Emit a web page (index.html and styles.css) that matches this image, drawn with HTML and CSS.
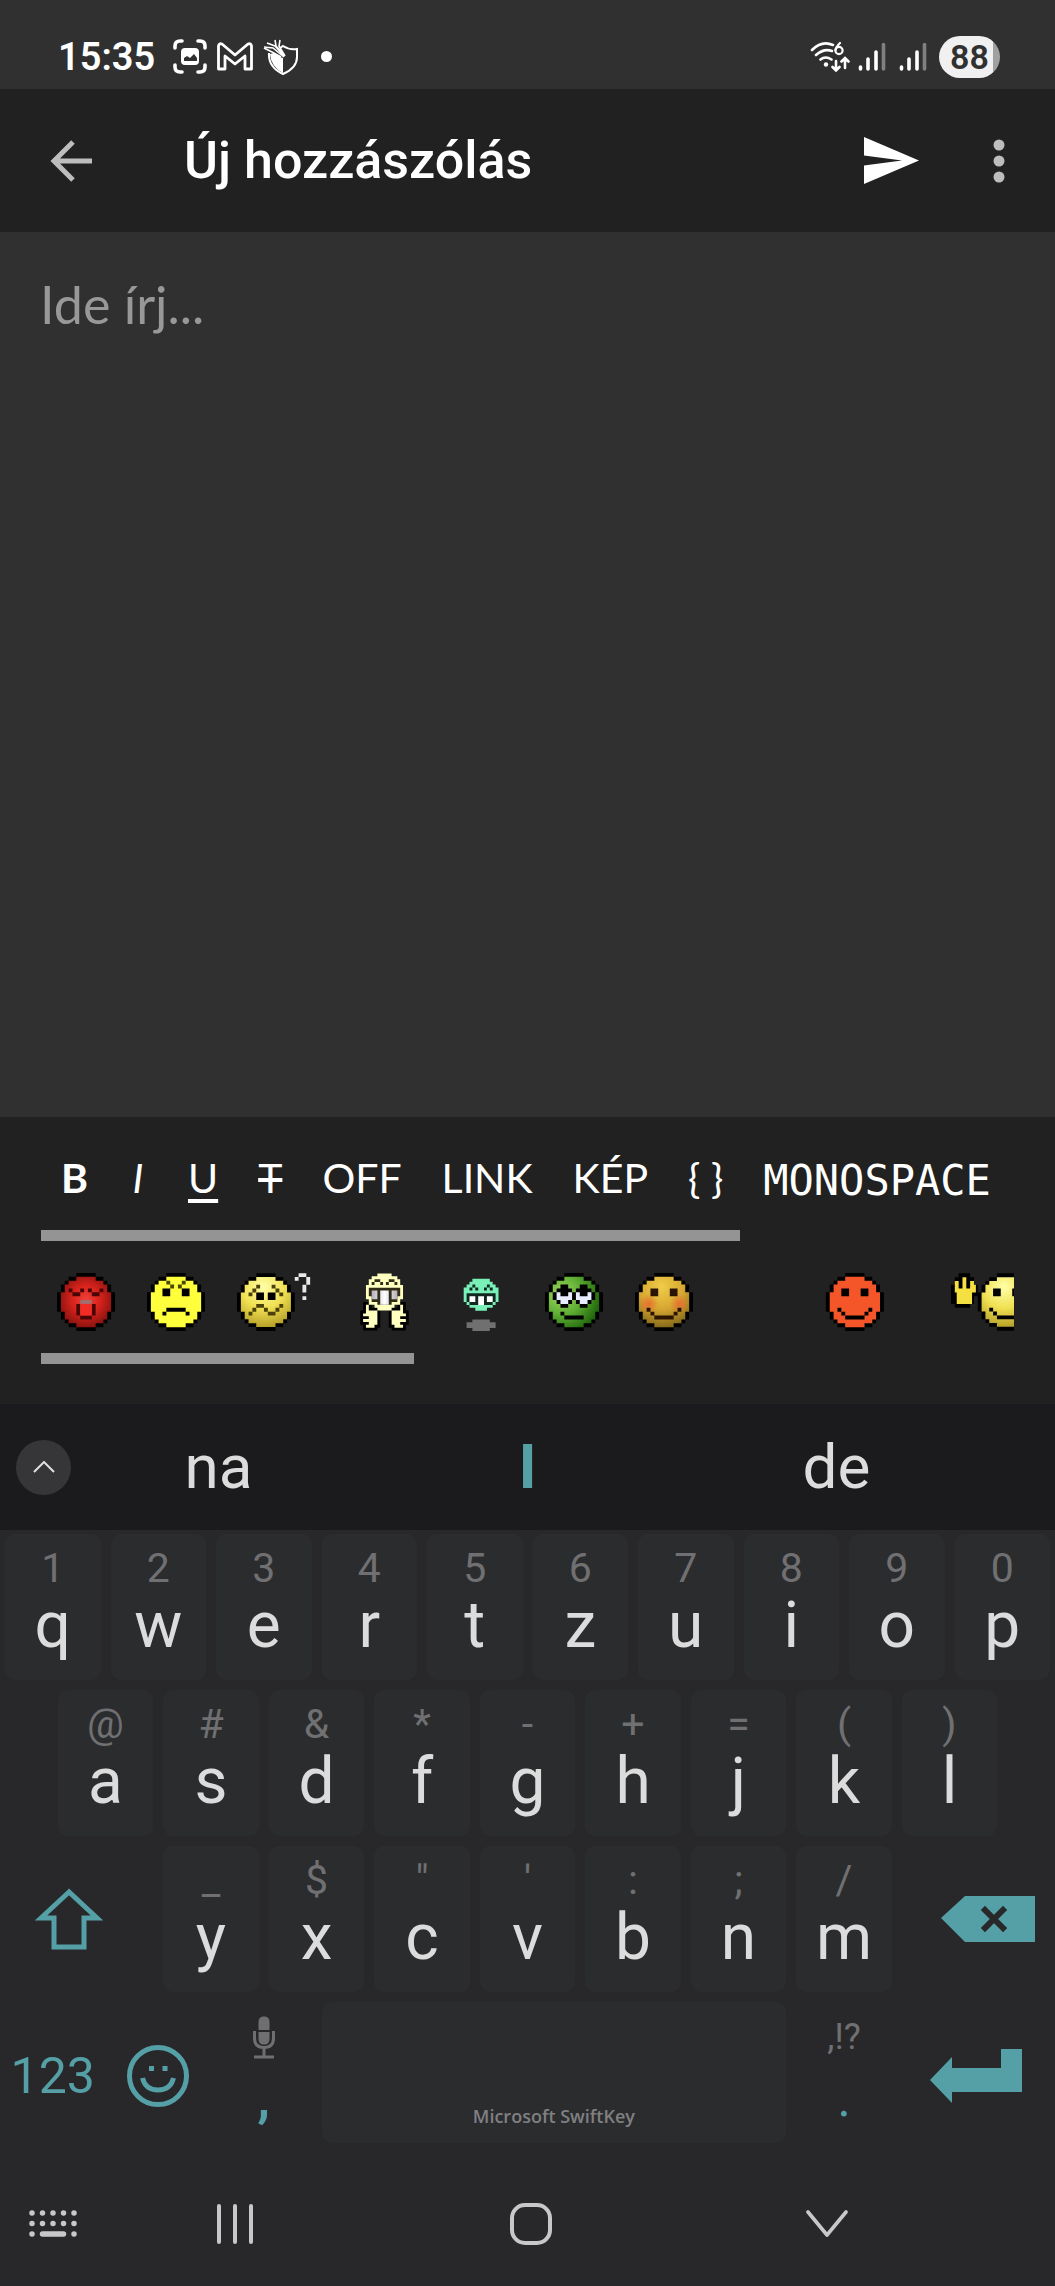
FILE: index.html
```html
<!DOCTYPE html>
<html lang="hu">

<head>
    <meta charset="UTF-8" />
    <meta name="viewport" content="width=device-width, initial-scale=1.0" />
    <title>Új hozzászólás</title>
    <link rel="stylesheet" href="styles.css">
</head>

<body>
    <!-- shared smiley shapes -->
    <svg class="defs" width="0" height="0" aria-hidden="true">
        <defs>
            <path id="edge" d="M5 0h5v1h2v1h1v1h1v2h1v5h-1v2h-1v1h-1v1h-2v1h-5v-1h-2v-1h-1v-1h-1v-2h-1v-5h1v-2h1v-1h1v-1h2z" />
            <path id="disc" d="M5 1h5v1h2v1h1v2h1v5h-1v2h-1v1h-2v1h-5v-1h-2v-1h-1v-2h-1v-5h1v-2h1v-1h2z" />
            <path id="smile" d="M4 4h2v2h-2zM9 4h2v2h-2zM3 9h1v1h-1zM4 10h1v1h-1zM5 11h5v1h-5zM10 10h1v1h-1zM11 9h1v1h-1z" />
            <radialGradient id="red" cx=".5" cy=".45" r=".55">
                <stop offset="0" stop-color="#f0403a" />
                <stop offset=".5" stop-color="#d8231c" />
                <stop offset="1" stop-color="#8e1410" />
            </radialGradient>
            <radialGradient id="yellow" cx=".45" cy=".2" r=".85">
                <stop offset="0" stop-color="#ffffa8" />
                <stop offset=".5" stop-color="#f0e052" />
                <stop offset="1" stop-color="#b09a24" />
            </radialGradient>
            <radialGradient id="green" cx=".25" cy=".35" r=".8">
                <stop offset="0" stop-color="#a2d860" />
                <stop offset=".5" stop-color="#5fae34" />
                <stop offset="1" stop-color="#20640c" />
            </radialGradient>
            <radialGradient id="gold" cx=".45" cy=".2" r=".85">
                <stop offset="0" stop-color="#f0cc48" />
                <stop offset=".5" stop-color="#d8a832" />
                <stop offset="1" stop-color="#7e6418" />
            </radialGradient>
            <radialGradient id="cheek">
                <stop offset="0" stop-color="#e87030" />
                <stop offset="1" stop-color="#e87030" stop-opacity="0" />
            </radialGradient>
            <linearGradient id="teeth">
                <stop offset="0" stop-color="#b4b0bc" />
                <stop offset=".5" stop-color="#fff" />
                <stop offset="1" stop-color="#b4b0bc" />
            </linearGradient>
        </defs>
    </svg>

    <div class="screen">
        <!-- status bar -->
        <div class="status">
            <span class="time">15:35</span>
            <svg class="s-shot" width="34" height="35" viewBox="0 0 34 35" fill="none" stroke="#fff" stroke-width="3.600" stroke-linecap="round">
                <path d="M2 9V7q0-5 5-5h2M25 2h2q5 0 5 5v2M32 26v2q0 5-5 5h-2M9 33H7q-5 0-5-5v-2" />
                <rect x="8" y="9" width="18" height="17" rx="4" fill="#fff" stroke="none" />
                <path d="M11 22v-3l3-2 3 2 4-4 3 4v3z" fill="#303030" stroke="none" />
            </svg>
            <svg class="s-mail" width="36" height="29" viewBox="0 0 36 29" fill="none" stroke="#fff" stroke-width="2.800" stroke-linejoin="round">
                <path d="M1.500 27V4Q2 1 5 2l13 11L31 2q3-1 3.500 2v23H28V14l-10 8L8 14v13z" />
            </svg>
            <svg class="s-shield" width="36" height="36" viewBox="0 0 36 36" fill="none" stroke="#fff" stroke-width="2">
                <path d="M17 9l3-2q6 4 14 3v8q0 11-14 17Q5 28 6 14" />
                <path d="M20 19v15Q8 28 7 15l4-1 6 4z" fill="#fff" stroke="none" />
                <path d="M1 8l9 1 11 9M4 4l8 3 9 10M12 1l1 6 9 10M17 1l-1 6 6 10M1 9l8 4 9 5" stroke-width="1.600" />
            </svg>
            <i class="dot"></i>
            <span class="space"></span>
            <svg class="s-wifi" width="40" height="32" viewBox="0 0 40 32" fill="none" stroke="#fff" stroke-width="2.600" stroke-linecap="round">
                <path d="M2 9q10-10 21-5M6 14q8-7 16-4M10.500 18.500q5-4 11 0" />
                <circle cx="16" cy="23.500" r="2.200" fill="#fff" stroke="none" />
                <path d="M30 2q-4 4-4.500 7" stroke-width="2.200" />
                <circle cx="29" cy="9.500" r="3.600" stroke-width="2.200" />
                <path d="M26 20v9M22.500 26l3.500 3.500 3.500-3.500M35 27v-9M31.500 20.500l3.500-3.500 3.500 3.500" />
            </svg>
            <svg class="s-signal" width="28" height="30" viewBox="0 0 28 30" stroke="#fff" stroke-width="3.600" stroke-linecap="round">
                <path d="M2.500 25v2M10 17v10M18 10v17" />
                <path d="M25.500 2.500V27" stroke="#808080" />
            </svg>
            <svg class="s-signal" width="28" height="30" viewBox="0 0 28 30" stroke="#fff" stroke-width="3.600" stroke-linecap="round">
                <path d="M2.500 25v2M10 17v10M18 10v17" />
                <path d="M25.500 2.500V27" stroke="#808080" />
            </svg>
            <span class="battery">88</span>
        </div>

        <!-- title bar -->
        <header class="bar">
            <button class="back" aria-label="Vissza">
                <svg width="42" height="42" viewBox="0 0 42 42" fill="none" stroke="#bdbdbd" stroke-width="5">
                    <path d="M42 21H4M23 2L4 21l19 19" />
                </svg>
            </button>
            <h1>Új hozzászólás</h1>
            <button class="send" aria-label="Küldés">
                <svg width="55" height="47" viewBox="0 0 55 47" fill="#fff">
                    <path d="M0 0l55 23.500L0 47V28.500l38-5-38-5z" />
                </svg>
            </button>
            <button class="more" aria-label="Továbbiak">
                <svg width="12" height="44" viewBox="0 0 12 44" fill="#bdbdbd">
                    <circle cx="6" cy="6" r="5.500" />
                    <circle cx="6" cy="22" r="5.500" />
                    <circle cx="6" cy="38" r="5.500" />
                </svg>
            </button>
        </header>

        <textarea class="post" aria-label="Hozzászólás" placeholder="Ide írj..."></textarea>

        <!-- formatting and smileys -->
        <div class="tools">
            <div class="formats">
                <button class="b">B</button>
                <button class="i">I</button>
                <button class="u">U</button>
                <button class="t">T</button>
                <button>OFF</button>
                <button>LINK</button>
                <button>KÉP</button>
                <button class="code">{ }</button>
                <button class="mono">MONOSPACE</button>
            </div>
            <div class="track"><i class="thumb thumb-formats"></i></div>
            <div class="smileys">
                <button aria-label="dühös">
                    <svg width="58" height="58" viewBox="0 0 15 15">
                        <use href="#edge" />
                        <use href="#disc" fill="url(#red)" />
                        <path fill="#4a0606" d="M3 4h1v1h-1zM4 5h2v1h-2zM6 4h1v1h-1zM8 4h1v1h-1zM9 5h2v1h-2zM11 4h1v1h-1zM5 8h1v3h-1zM9 8h1v3h-1zM6 11h3v1h-3z" />
                        <path fill="#a07070" d="M6 7h3v1h-3z" />
                        <path fill="#f02c24" d="M6 8h3v3h-3z" />
                    </svg>
                </button>
                <button aria-label="mérges">
                    <svg width="58" height="58" viewBox="0 0 15 15">
                        <use href="#edge" />
                        <use href="#disc" fill="#ffff3c" />
                        <path d="M4 4h2v2h-2zM9 4h2v2h-2zM5 9h5v1h-5zM4 10h1v1h-1zM10 10h1v1h-1z" />
                        <path fill="#4a4a08" d="M5 2h1v1h-1zM6 3h1v1h-1zM9 2h1v1h-1zM8 3h1v1h-1z" />
                    </svg>
                </button>
                <button aria-label="értetlen">
                    <svg width="77" height="58" viewBox="0 0 20 15">
                        <use href="#edge" />
                        <use href="#disc" fill="url(#yellow)" />
                        <path d="M5 5h2v2h-2zM8 5h2v2h-2z" />
                        <path fill="#4a4008" d="M3 5h1v1h-1zM4 4h1v1h-1zM5 3h1v1h-1zM9 3h1v1h-1zM10 4h1v1h-1zM11 5h1v1h-1zM3 10h1v1h-1zM4 9h1v1h-1zM5 8h2v1h-2zM7 9h1v1h-1zM8 10h2v1h-2zM10 9h1v1h-1zM11 8h1v1h-1z" />
                        <path fill="#e8e8e8" d="M16 0h2v1h-2zM15 1h1v1h-1zM18 1h1v1h-1zM18 2h1v1h-1zM17 3h1v2h-1zM17 6h1v1h-1z" />
                    </svg>
                </button>
                <button aria-label="éljen">
                    <svg width="77" height="58" viewBox="0 0 27 20">
                        <path d="M6 10h3v2h3v7h-1v1h-5v-2h-1v-5h1zM21 10h-3v2h-3v7h1v1h5v-2h1v-5h-1z" />
                        <path fill="#ffffc0" d="M11 0h5v1h2v1h1v2h1v5h-1v2h-2v1h-1v1h-5v-1h-1v-1h-2v-2h-1v-5h1v-2h1v-1h2z" />
                        <path fill="#302c18" d="M9 3h1v1h-1zM10 2h2v1h-2zM12 3h1v1h-1zM14 3h1v1h-1zM15 2h2v1h-2zM17 3h1v1h-1zM8 5h11v3h-1v2h-2v1h-5v-1h-2v-2h-1z" />
                        <path fill="url(#teeth)" d="M9 6h2v3h-2zM12 6h3v5h-3zM16 6h2v3h-2z" />
                        <path fill="#ffffc0" d="M7 11h1v2h3v5h-1v1h-3v-1h1v-1h-2v-1h2v-1h-2v-1h1zM20 11h-1v2h-3v5h1v1h3v-1h-1v-1h2v-1h-2v-1h2v-1h-1z" />
                    </svg>
                </button>
                <button aria-label="vigyor">
                    <svg width="58" height="58" viewBox="0 0 20 20">
                        <path fill="#78f0b8" d="M6 2h6v1h1v1h1v1h1v5h-1v1h-1v1h-2v1h-4v-1h-2v-1h-1v-1h-1v-5h1v-1h1v-1h1z" />
                        <path fill="#102820" d="M5 5h1v1h-1zM6 4h1v1h-1zM7 5h1v1h-1zM10 5h1v1h-1zM11 4h1v1h-1zM12 5h1v1h-1zM4 7h10v3h-1v1h-8v-1h-1z" />
                        <path fill="#fff" d="M5 8h2v2h-2zM8 8h2v3h-2zM11 8h2v2h-2z" />
                        <path fill="#707070" d="M6 16h6v1h2v2h-2v1h-6v-1h-2v-2h2z" />
                    </svg>
                </button>
                <button aria-label="szemforgatás">
                    <svg width="58" height="58" viewBox="0 0 15 15">
                        <use href="#edge" />
                        <use href="#disc" fill="url(#green)" />
                        <path d="M4 3h2v1h1v1h1v2h-1v1h-1v1h-2v-1h-1v-1h-1v-2h1v-1h1zM9 3h2v1h1v1h1v2h-1v1h-1v1h-2v-1h-1v-1h-1v-2h1v-1h1z" />
                        <path fill="#e8ecff" d="M3 5h1v1h2v-1h1v2h-1v1h-2v-1h-1zM8 5h1v1h2v-1h1v2h-1v1h-2v-1h-1z" />
                        <path d="M4 10h1v1h-1zM5 11h5v1h-5z" />
                    </svg>
                </button>
                <button aria-label="elpirul">
                    <svg width="58" height="58" viewBox="0 0 15 15">
                        <use href="#edge" />
                        <use href="#disc" fill="url(#gold)" />
                        <circle cx="3.500" cy="8" r="2.500" fill="url(#cheek)" />
                        <circle cx="11.500" cy="8" r="2.500" fill="url(#cheek)" />
                        <use href="#smile" fill="#2c1404" />
                    </svg>
                </button>
                <button aria-label="vörös">
                    <svg width="194" height="58" viewBox="0 0 50 15">
                        <g transform="translate(26)">
                            <use href="#edge" />
                            <use href="#disc" fill="#f4562a" />
                            <use href="#smile" />
                        </g>
                    </svg>
                </button>
                <button aria-label="integet">
                    <svg width="88" height="58" viewBox="0 0 23 15">
                        <path d="M1 1h1v-1h3v1h1v2h1v3h-1v2h-1v1h-4v-1h-1v-5h1z" />
                        <path fill="#f4e040" d="M1 2h1v2h1v-3h1v3h1v-2h1v1h.500v2h-1v3h-4v-3h-.500z" />
                        <g transform="translate(7)">
                            <use href="#edge" />
                            <use href="#disc" fill="url(#yellow)" />
                            <use href="#smile" />
                        </g>
                    </svg>
                </button>
            </div>
            <div class="track"><i class="thumb thumb-smileys"></i></div>
        </div>

        <!-- word suggestions -->
        <div class="suggest">
            <button class="toggle" aria-label="Eszköztár">
                <svg width="22" height="12" viewBox="0 0 22 12" fill="none" stroke="#e0e0e0" stroke-width="2">
                    <path d="M1 11L11 1l10 10" />
                </svg>
            </button>
            <button class="word">na</button>
            <button class="word main">I</button>
            <button class="word">de</button>
        </div>

        <!-- keyboard -->
        <div class="keyboard">
            <div class="row">
                <button class="key"><small>1</small>q</button>
                <button class="key"><small>2</small>w</button>
                <button class="key"><small>3</small>e</button>
                <button class="key"><small>4</small>r</button>
                <button class="key"><small>5</small>t</button>
                <button class="key"><small>6</small>z</button>
                <button class="key"><small>7</small>u</button>
                <button class="key"><small>8</small>i</button>
                <button class="key"><small>9</small>o</button>
                <button class="key"><small>0</small>p</button>
            </div>
            <div class="row inset">
                <button class="key"><small>@</small>a</button>
                <button class="key"><small>#</small>s</button>
                <button class="key"><small>&amp;</small>d</button>
                <button class="key"><small>*</small>f</button>
                <button class="key"><small>-</small>g</button>
                <button class="key"><small>+</small>h</button>
                <button class="key"><small>=</small>j</button>
                <button class="key"><small>(</small>k</button>
                <button class="key"><small>)</small>l</button>
            </div>
            <div class="row">
                <button class="fn wide shift" aria-label="Shift">
                    <svg width="68" height="62" viewBox="0 0 68 62" fill="none" stroke="#559fa7" stroke-width="5">
                        <path d="M34 4L6 30h13v29h30V30h13z" />
                    </svg>
                </button>
                <button class="key"><small>_</small>y</button>
                <button class="key"><small>$</small>x</button>
                <button class="key"><small>"</small>c</button>
                <button class="key"><small>'</small>v</button>
                <button class="key"><small>:</small>b</button>
                <button class="key"><small>;</small>n</button>
                <button class="key"><small>/</small>m</button>
                <button class="fn wide delete" aria-label="Törlés">
                    <svg width="94" height="46" viewBox="0 0 94 46">
                        <path d="M0 22L24 0h70v46H24z" fill="#559fa7" />
                        <path d="M44 14l18 18M62 14L44 32" stroke="#28282a" stroke-width="6" stroke-linecap="square" />
                    </svg>
                </button>
            </div>
            <div class="row last">
                <button class="fn num">123</button>
                <button class="fn" aria-label="Emoji">
                    <svg width="62" height="62" viewBox="0 0 62 62" fill="none" stroke="#559fa7" stroke-width="5">
                        <circle cx="31" cy="31" r="28.500" />
                        <path d="M15.500 33q3 12 15.500 12t15.500-12" />
                        <path d="M22 23.500h5M35.500 23.500h5" />
                    </svg>
                </button>
                <button class="fn punct">
                    <svg width="22" height="43" viewBox="0 0 22 43" fill="none" stroke="#6f6f71" stroke-width="3">
                        <path d="M5.500 14V6q0-5.500 5.500-5.500T16.500 6v8zM5.500 16v7q0 5.500 5.500 5.500t5.500-5.500v-7z" fill="#6f6f71" stroke="none" />
                        <path d="M1.500 15v7q0 9.500 9.500 9.500t9.500-9.500v-7M11 31v9M1 41h20" />
                    </svg>
                    <b>,</b>
                </button>
                <button class="key spacebar">Microsoft SwiftKey</button>
                <button class="fn punct"><small>,!?</small><span>.</span></button>
                <button class="fn wide" aria-label="Enter">
                    <svg width="92" height="54" viewBox="0 0 92 54" fill="#559fa7">
                        <path d="M0 31L22 8v11h49V0h21v43H22v11z" />
                    </svg>
                </button>
            </div>
        </div>

        <!-- system navigation -->
        <nav class="nav">
            <button class="switch" aria-label="Billentyűzet váltása">
                <svg width="48" height="28" viewBox="0 0 48 28" fill="none" stroke="#c8c8ca" stroke-width="5.500" stroke-linecap="round">
                    <path d="M3 3h0M13.500 3h0M24 3h0M34.500 3h0M45 3h0M3 13.500h0M13.500 13.500h0M24 13.500h0M34.500 13.500h0M45 13.500h0M3 24h0M13.500 24h21M45 24h0" />
                </svg>
            </button>
            <button aria-label="Legutóbbi">
                <svg width="38" height="40" viewBox="0 0 38 40" stroke="#c8c8ca" stroke-width="4" stroke-linecap="round">
                    <path d="M3 2v36M19 2v36M35 2v36" />
                </svg>
            </button>
            <button aria-label="Kezdőképernyő">
                <svg width="42" height="42" viewBox="0 0 42 42" fill="none" stroke="#c8c8ca" stroke-width="4">
                    <rect x="2" y="2" width="38" height="38" rx="13" />
                </svg>
            </button>
            <button aria-label="Elrejtés">
                <svg width="42" height="28" viewBox="0 0 42 28" fill="none" stroke="#c8c8ca" stroke-width="3.600" stroke-linecap="round" stroke-linejoin="round">
                    <path d="M2 2l19 23L40 2" />
                </svg>
            </button>
        </nav>
    </div>
</body>

</html>
```
FILE: styles.css
```css
* {
    margin: 0;
    padding: 0;
    box-sizing: border-box;
}

body {
    background: #303030;
    color: #fff;
    font-family: Roboto, "Liberation Sans", sans-serif;
}

button {
    border: none;
    background: none;
    color: inherit;
    font: inherit;
    cursor: pointer;
}

svg {
    display: block;
    flex: none;
}

.defs {
    position: absolute;
}

.screen {
    display: flex;
    flex-direction: column;
    min-height: 100vh;
}

/* status bar */
.status {
    display: flex;
    align-items: center;
    height: 89px;
    padding: 24px 55px 0 58px;
}

.time {
    font-size: 38px;
    font-weight: 600;
    line-height: 48px;
}

.s-shot {
    margin-left: 18px;
}

.s-mail,
.s-shield {
    margin-left: 10px;
}

.dot {
    width: 11px;
    height: 11px;
    margin-left: 22px;
    border-radius: 50%;
    background: #fff;
}

.space {
    flex: 1;
}

.s-signal {
    margin-left: 8px;
}

.s-signal + .s-signal {
    margin-left: 13px;
}

.battery {
    width: 61px;
    margin-left: 12px;
    border-radius: 21px;
    background: linear-gradient(to right, #f0f0f0 88%, #a0a0a0 88%);
    color: #303030;
    font-size: 34px;
    font-weight: 600;
    line-height: 42px;
    text-align: center;
}

/* title bar */
.bar {
    display: flex;
    align-items: center;
    height: 143px;
    padding: 0 50px;
    background: #212121;
}

.bar h1 {
    flex: 1;
    padding-left: 92px;
    font-size: 52px;
    font-weight: 500;
    line-height: 64px;
}

.send {
    margin-right: 74px;
}

/* editor */
.post {
    flex: 1;
    width: 100%;
    padding: 40px;
    border: none;
    outline: none;
    resize: none;
    background: #303030;
    color: #fff;
    font: 52px/64px Lato, "Liberation Sans", sans-serif;
}

.post::placeholder {
    color: #989898;
    opacity: 1;
}

/* formatting and smileys */
.tools {
    padding: 32px 41px 40px;
    background: #212121;
}

.formats {
    display: flex;
    gap: 40px;
    height: 81px;
    padding-left: 20px;
    overflow: hidden;
    font: 41px/58px Lato, "Liberation Sans", sans-serif;
}

.formats button {
    display: block;
    flex: none;
    min-width: 20px;
    height: 58px;
}

.b {
    font-weight: 700;
}

.i {
    font-style: italic;
}

.u {
    text-decoration: underline;
    text-underline-offset: 6px;
}

.t {
    text-decoration: line-through;
}

.formats .mono {
    font: 42px/64px "DejaVu Sans Mono", monospace;
}

.track {
    height: 11px;
}

.thumb {
    display: block;
    height: 11px;
    background: #949494;
}

.thumb-formats {
    width: 71.8%;
}

.thumb-smileys {
    width: 38.3%;
}

.smileys {
    display: flex;
    gap: 32px;
    height: 112px;
    padding: 32px 0 0 16px;
    overflow: hidden;
}

.smileys button {
    flex: none;
    height: 58px;
}

/* suggestions */
.suggest {
    display: grid;
    grid-template-columns: 64px 1fr 1fr 1fr 64px;
    align-items: center;
    height: 126px;
    background: #1b1b1d;
}

.toggle {
    display: flex;
    align-items: center;
    justify-content: center;
    width: 55px;
    height: 55px;
    margin-left: 16px;
    border-radius: 50%;
    background: #363638;
}

.word {
    color: #dcdcdd;
    font-size: 62px;
    line-height: 76px;
}

.main {
    color: #559fa7;
    font-weight: 700;
}

/* keyboard */
.keyboard {
    display: grid;
    gap: 10px;
    padding-top: 4px;
    background: #28282a;
}

.row {
    display: grid;
    grid-template-columns: repeat(20, 1fr);
    height: 146px;
}

.last {
    height: 141px;
}

.key,
.fn {
    grid-column: span 2;
}

.key {
    display: flex;
    flex-direction: column;
    align-items: center;
    margin: 0 5px;
    padding-top: 10px;
    border-radius: 10px;
    background: #2b2c2e;
    color: #dcdcdd;
    font-size: 64px;
    line-height: 68px;
}

.key small {
    color: #707072;
    font-size: 41px;
    line-height: 48px;
}

.inset .key:first-child {
    grid-column: 2 / span 2;
}

.fn {
    display: flex;
    align-items: center;
    justify-content: center;
    color: #559fa7;
}

.row .wide {
    grid-column: span 3;
}

.shift {
    padding-right: 20px;
}

.delete {
    padding-left: 24px;
}

.last .fn {
    padding-top: 6px;
}

.num {
    font-size: 50px;
    line-height: 64px;
}

.last .punct {
    flex-direction: column;
    justify-content: space-between;
    padding: 14px 0 16px;
    font-size: 52px;
    line-height: 56px;
}

.punct small {
    color: #707072;
    font-size: 36px;
    line-height: 42px;
}

.row .spacebar {
    grid-column: span 9;
    justify-content: flex-end;
    padding-bottom: 13px;
    color: #808082;
    font: 600 18px/28px "Open Sans", "Noto Sans", sans-serif;
}

/* system navigation */
.nav {
    display: grid;
    grid-template-columns: 87px 1fr 1fr 1fr;
    height: 143px;
    padding: 18px 80px 0 0;
    background: #28282a;
}

.nav button {
    display: flex;
    align-items: center;
    justify-content: center;
}

.nav .switch {
    justify-content: flex-end;
    padding-right: 10px;
}
```
